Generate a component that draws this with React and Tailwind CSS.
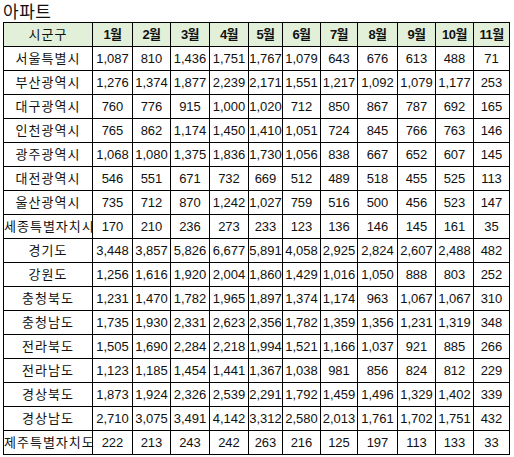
import React from 'react';

const MONTHS = ['1월', '2월', '3월', '4월', '5월', '6월', '7월', '8월', '9월', '10월', '11월'];
const WIDTHS = [89, 40, 38, 39, 39, 34, 38, 37, 40, 38, 38, 36];

const ROWS = [
  ['서울특별시', '1,087', '810', '1,436', '1,751', '1,767', '1,079', '643', '676', '613', '488', '71'],
  ['부산광역시', '1,276', '1,374', '1,877', '2,239', '2,171', '1,551', '1,217', '1,092', '1,079', '1,177', '253'],
  ['대구광역시', '760', '776', '915', '1,000', '1,020', '712', '850', '867', '787', '692', '165'],
  ['인천광역시', '765', '862', '1,174', '1,450', '1,410', '1,051', '724', '845', '766', '763', '146'],
  ['광주광역시', '1,068', '1,080', '1,375', '1,836', '1,730', '1,056', '838', '667', '652', '607', '145'],
  ['대전광역시', '546', '551', '671', '732', '669', '512', '489', '518', '455', '525', '113'],
  ['울산광역시', '735', '712', '870', '1,242', '1,027', '759', '516', '500', '456', '523', '147'],
  ['세종특별자치시', '170', '210', '236', '273', '233', '123', '136', '146', '145', '161', '35'],
  ['경기도', '3,448', '3,857', '5,826', '6,677', '5,891', '4,058', '2,925', '2,824', '2,607', '2,488', '482'],
  ['강원도', '1,256', '1,616', '1,920', '2,004', '1,860', '1,429', '1,016', '1,050', '888', '803', '252'],
  ['충청북도', '1,231', '1,470', '1,782', '1,965', '1,897', '1,374', '1,174', '963', '1,067', '1,067', '310'],
  ['충청남도', '1,735', '1,930', '2,331', '2,623', '2,356', '1,782', '1,359', '1,356', '1,231', '1,319', '348'],
  ['전라북도', '1,505', '1,690', '2,284', '2,218', '1,994', '1,521', '1,166', '1,037', '921', '885', '266'],
  ['전라남도', '1,123', '1,185', '1,454', '1,441', '1,367', '1,038', '981', '856', '824', '812', '229'],
  ['경상북도', '1,873', '1,924', '2,326', '2,539', '2,291', '1,792', '1,459', '1,496', '1,329', '1,402', '339'],
  ['경상남도', '2,710', '3,075', '3,491', '4,142', '3,312', '2,580', '2,013', '1,761', '1,702', '1,751', '432'],
  ['제주특별자치도', '222', '213', '243', '242', '263', '216', '125', '197', '113', '133', '33'],
];

export default function App() {
  return (
    <div className="w-[514px] h-[457px] bg-white pl-[3px] pt-[3px] text-[#111] font-['Liberation_Sans','Noto_Sans_CJK_KR',sans-serif]">
      <div className="h-[19px] text-[17px] leading-[19px] tracking-[0.5px]">아파트</div>
      <table className="table-fixed border-collapse w-[507px] text-[13px] text-center">
        <colgroup>
          {WIDTHS.map((w, i) => (
            <col key={i} style={{ width: w }} />
          ))}
        </colgroup>
        <thead>
          <tr className="h-[24px] bg-[#e2efd9]">
            <th className="border border-black p-0 font-normal tracking-[1px]">시군구</th>
            {MONTHS.map((m) => (
              <th key={m} className="border border-black p-0 font-bold tracking-[-0.5px]">{m}</th>
            ))}
          </tr>
        </thead>
        <tbody>
          {ROWS.map((row) => (
            <tr key={row[0]} className="h-[24px]">
              {row.map((cell, i) => (
                <td
                  key={i}
                  className={
                    i === 0
                      ? 'border border-black p-0 whitespace-nowrap tracking-[1px]'
                      : 'border border-black p-0 whitespace-nowrap'
                  }
                >
                  {cell}
                </td>
              ))}
            </tr>
          ))}
        </tbody>
      </table>
    </div>
  );
}
